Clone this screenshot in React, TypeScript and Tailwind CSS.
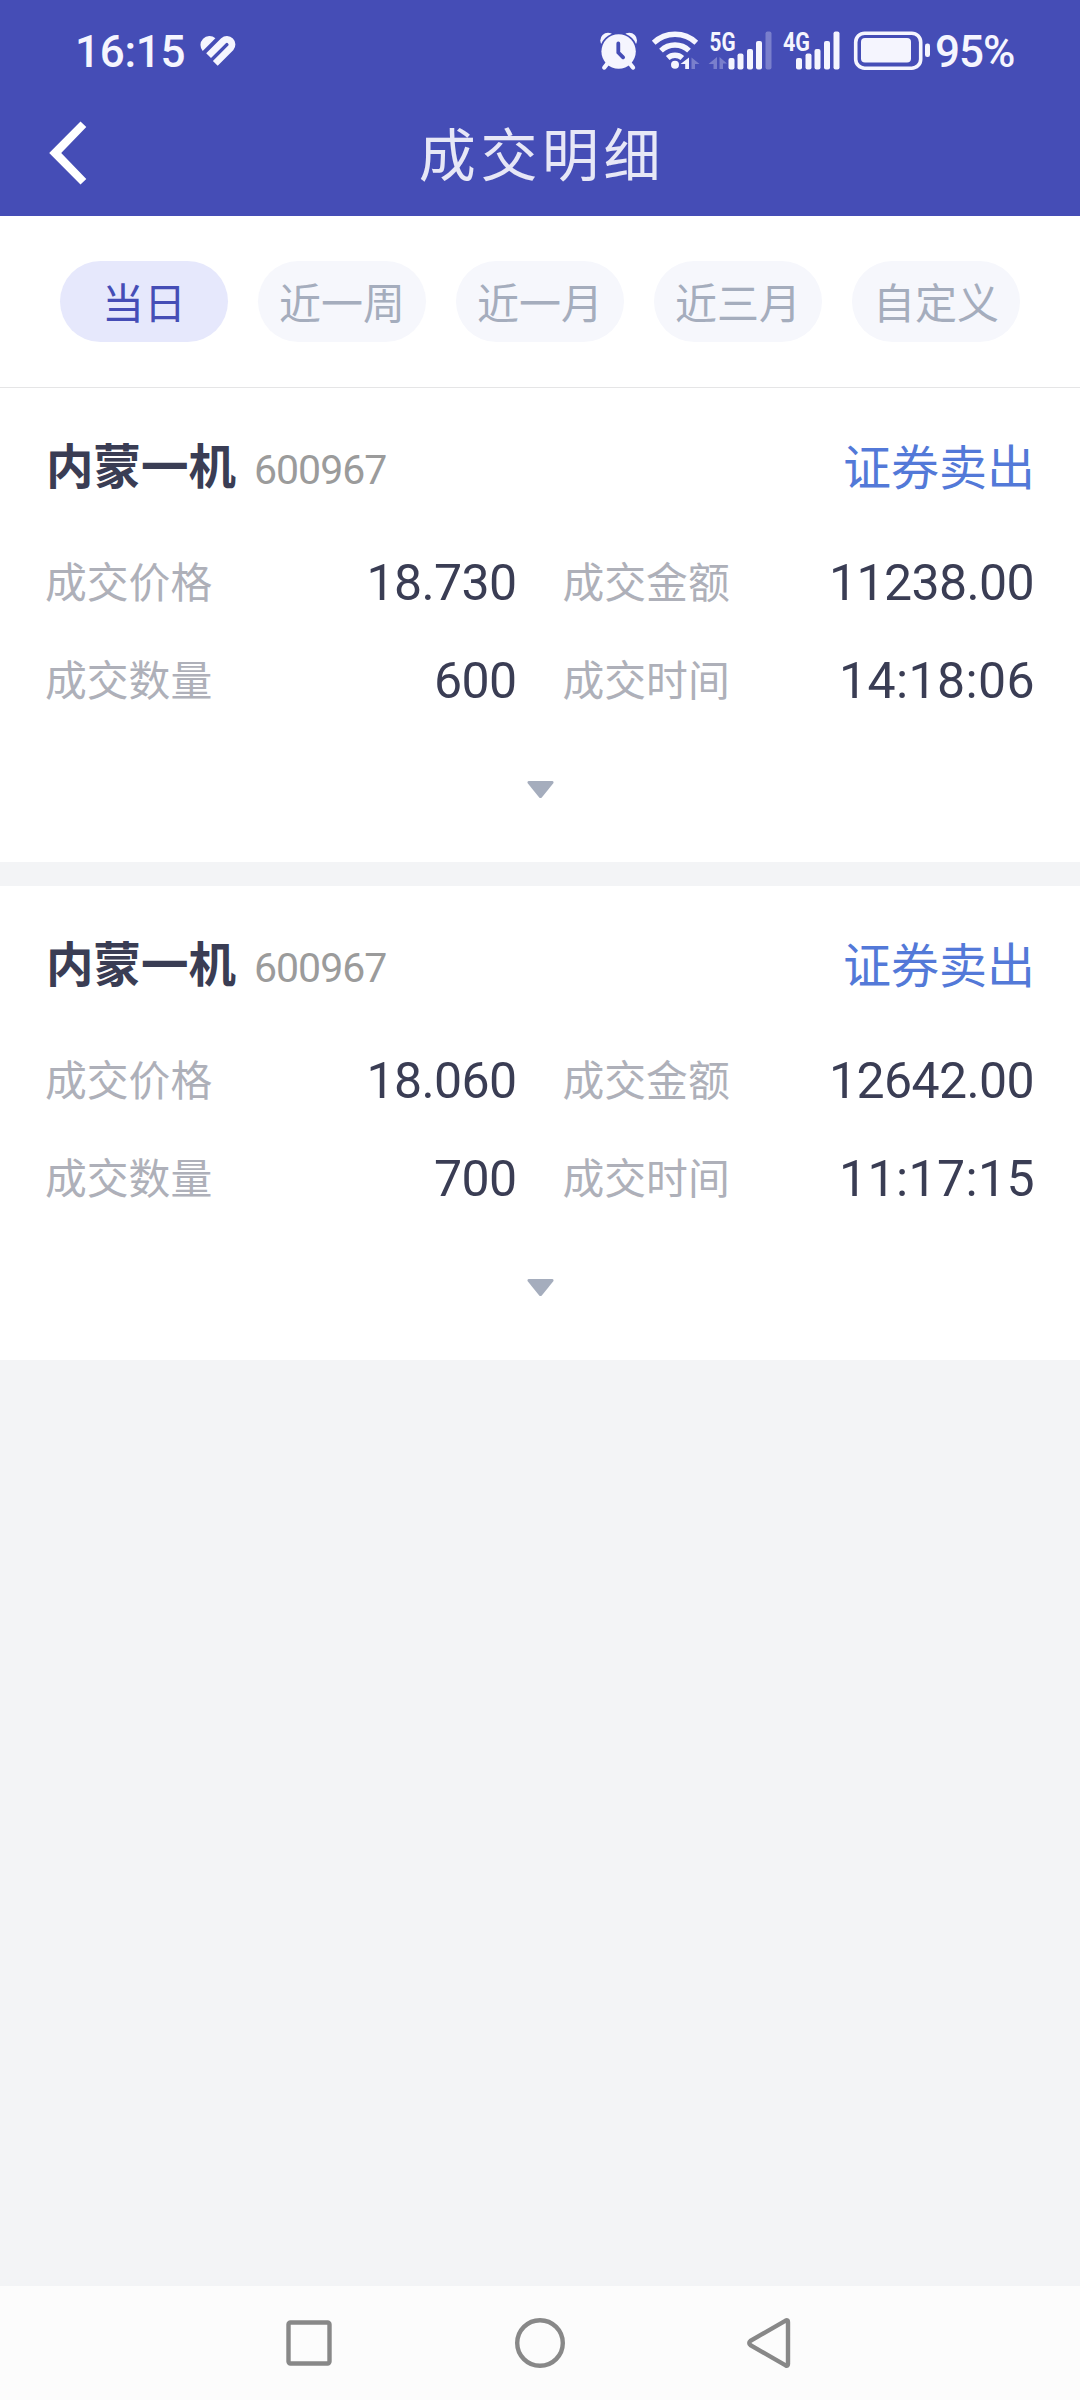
type Deal = {
  name: string;
  code: string;
  side: string;
  price: string;
  amount: string;
  volume: string;
  time: string;
};

const TABS = ["当日", "近一周", "近一月", "近三月", "自定义"];

const DEALS: Deal[] = [
  {
    name: "内蒙一机",
    code: "600967",
    side: "证券卖出",
    price: "18.730",
    amount: "11238.00",
    volume: "600",
    time: "14:18:06",
  },
  {
    name: "内蒙一机",
    code: "600967",
    side: "证券卖出",
    price: "18.060",
    amount: "12642.00",
    volume: "700",
    time: "11:17:15",
  },
];

function StatusIcons() {
  return (
    <svg width="334" height="80" viewBox="598 11 334 80" className="overflow-visible" fill="#f5f5fe">
      {/* Alarm */}
      <circle cx="608" cy="40.5" r="7.7" />
      <circle cx="629.3" cy="40.5" r="7.7" />
      <path d="M607.500 63.500l-3.200 4M629.800 63.500l3.200 4" stroke="#f5f5fe" strokeWidth="4.400" strokeLinecap="round" />
      <path d="M599.600 51.500a19 19 0 0 1 38 0z" fill="#454db6" />
      <circle cx="618.6" cy="51.5" r="17.2" />
      <path d="M618.300 43.500v9l4.800 4.800" fill="none" stroke="#454db6" strokeWidth="3.800" strokeLinecap="round" />

      {/* Wifi */}
      <g fill="none" stroke="#f5f5fe" strokeWidth="5.400">
        <path d="M653.700 42.800a31 31 0 0 1 42.600 0" />
        <path d="M661 50.600a20.500 20.500 0 0 1 28 0" />
        <path d="M667.700 58a11 11 0 0 1 14.600 0" />
      </g>
      <circle cx="675" cy="64.700" r="4" />
      <path d="M689 57.500v11.500h-3.800v-5h-4.700z" />
      <path d="M691.500 69v-11.500l8 6.500h-4.500v5z" opacity="0.3" />

      {/* 5G */}
      <text x="709.500" y="50.500" fontSize="25.500" fontWeight="700" textLength="26" lengthAdjust="spacingAndGlyphs">
        5G
      </text>
      <path d="M717 57v12h-3.500v-5h-5zM719.500 69v-12l7.500 6.500h-4v5.500z" opacity="0.3" />
      <rect x="728.500" y="58" width="6" height="11.500" rx="2" />
      <rect x="737.500" y="53.500" width="6" height="16" rx="2" />
      <rect x="747" y="49" width="6" height="20.500" rx="2" />
      <rect x="756" y="41" width="6" height="28.500" rx="2" />
      <rect x="765.500" y="31.500" width="6" height="38" rx="2" opacity="0.3" />

      {/* 4G */}
      <text x="783" y="50.500" fontSize="25.500" fontWeight="700" textLength="27" lengthAdjust="spacingAndGlyphs">
        4G
      </text>
      <rect x="796" y="58" width="6" height="11.500" rx="2" />
      <rect x="805.500" y="53.500" width="6" height="16" rx="2" />
      <rect x="814.500" y="49" width="6" height="20.500" rx="2" />
      <rect x="824" y="41" width="6" height="28.500" rx="2" />
      <rect x="833.500" y="31.500" width="6" height="38" rx="2" />

      {/* Battery */}
      <rect x="855.700" y="33.200" width="65" height="35" rx="9" fill="none" stroke="#f5f5fe" strokeWidth="3.600" />
      <rect x="861" y="38" width="50" height="24.500" rx="4" />
      <rect x="925" y="43.500" width="5" height="13.500" rx="2.300" />
    </svg>
  );
}

function StatusBar() {
  return (
    <div className="flex h-[102px] items-center pl-[75px] pr-[65px] text-[#f5f5fe]">
      <span className="w-[125px] pt-[1px] text-[44px] font-medium leading-none tracking-[-0.3px]">16:15</span>
      <svg width="38" height="32" viewBox="200 35 38 32" fill="none">
        <path d="M202.700 51A9 9 0 0 1 215.400 38.300z" fill="#f5f5fe" />
        <path d="M208.600 55.700L223.500 40.800A5.100 5.100 0 0 1 230.700 48L215.300 63.400" stroke="#f5f5fe" strokeWidth="6.800" />
      </svg>
      <div className="ml-auto flex items-center">
        <StatusIcons />
        <span className="ml-[3px] w-[80px] whitespace-nowrap pt-[1px] text-[44px] font-medium leading-none tracking-[-1px]">
          95%
        </span>
      </div>
    </div>
  );
}

function Header() {
  return (
    <header className="h-[216px] bg-[#454db6]">
      <StatusBar />
      <div className="grid h-[102px] grid-cols-[1fr_auto_1fr] items-center">
        <button className="pl-[49px]">
          <svg width="38" height="64" viewBox="0 0 38 64" fill="#fff">
            <path d="M31.500 0.500L37.300 6L12.200 32L37.300 58L31.500 63.500L0.200 32z" />
          </svg>
        </button>
        <h1 className="pl-[4px] pt-[6px] text-[57px] leading-none tracking-[4.600px] text-[#e7e7f6]">成交明细</h1>
      </div>
    </header>
  );
}

function Tabs() {
  return (
    <nav className="flex h-[172px] gap-[30px] border-b border-[#e5e5e6] bg-white px-[60px] pt-[45px]">
      {TABS.map((tab, i) => (
        <button
          key={tab}
          className={
            i === 0
              ? "h-[81px] w-[168px] rounded-full bg-[#e6e8fc] pt-[6px] text-[42px] leading-none text-[#454db6]"
              : "h-[81px] w-[168px] rounded-full bg-[#f6f7fc] pt-[6px] text-[42px] leading-none text-[#a5adbd]"
          }
        >
          {tab}
        </button>
      ))}
    </nav>
  );
}

function Field({ label, value }: { label: string; value: string }) {
  return (
    <div className="flex h-[98px] items-center justify-between">
      <span className="pt-[6px] text-[41.800px] leading-none text-[#aeb0b9]">{label}</span>
      <span
        className={
          value.includes(":")
            ? "pt-[3px] text-[50px] leading-none tracking-[0.4px] text-[#3a3d54]"
            : "pr-[1px] pt-[3px] text-[50px] leading-none tracking-[-0.6px] text-[#3a3d54]"
        }
      >
        {value}
      </span>
    </div>
  );
}

function DealCard({ deal }: { deal: Deal }) {
  return (
    <section className="h-[474px] bg-white px-[45px] pt-[48px]">
      <div className="flex h-[60px] items-center">
        <h2 className="pl-[1px] pt-[6px] text-[47.500px] font-bold leading-none text-[#3a3d54]">{deal.name}</h2>
        <span className="ml-[18px] pt-[8px] text-[41px] leading-none tracking-[-1px] text-[#9b9b9b]">
          {deal.code}
        </span>
        <span className="ml-auto pt-[5px] text-[48px] leading-none text-[#5379d8]">{deal.side}</span>
      </div>
      <div className="mt-[36px] grid grid-cols-2 gap-x-[45px]">
        <Field label="成交价格" value={deal.price} />
        <Field label="成交金额" value={deal.amount} />
        <Field label="成交数量" value={deal.volume} />
        <Field label="成交时间" value={deal.time} />
      </div>
      <svg width="27" height="18" viewBox="0 0 27 18" className="mx-auto mt-[53px]" fill="#a5adbd">
        <path d="M1.500 0h24q1.500 0.500 1 2L14.800 16.500q-1.300 1.200-2.600 0L0.500 2q-0.500-1.500 1-2z" />
      </svg>
    </section>
  );
}

function NavBar() {
  return (
    <footer className="mt-auto flex h-[114px] items-center justify-center bg-[#fcfcfc]">
      <svg width="520" height="56" viewBox="280 2315 520 56" fill="none" stroke="#888" strokeWidth="4.400">
        <rect x="288.500" y="2322.500" width="41" height="41" rx="2" />
        <circle cx="540" cy="2343" r="22.800" />
        <path d="M785.600 2320.600Q788 2319.500 788 2322V2364Q788 2366.500 785.600 2365.400L750.500 2345.200Q748 2343 750.500 2340.800z" />
      </svg>
    </footer>
  );
}

export default function App() {
  return (
    <div className="flex h-[2400px] w-[1080px] flex-col bg-[#f3f4f6] font-[Roboto,'Noto_Sans_CJK_SC',sans-serif]">
      <Header />
      <Tabs />
      <main className="flex flex-col gap-[24px]">
        {DEALS.map((deal) => (
          <DealCard key={deal.time} deal={deal} />
        ))}
      </main>
      <NavBar />
    </div>
  );
}
